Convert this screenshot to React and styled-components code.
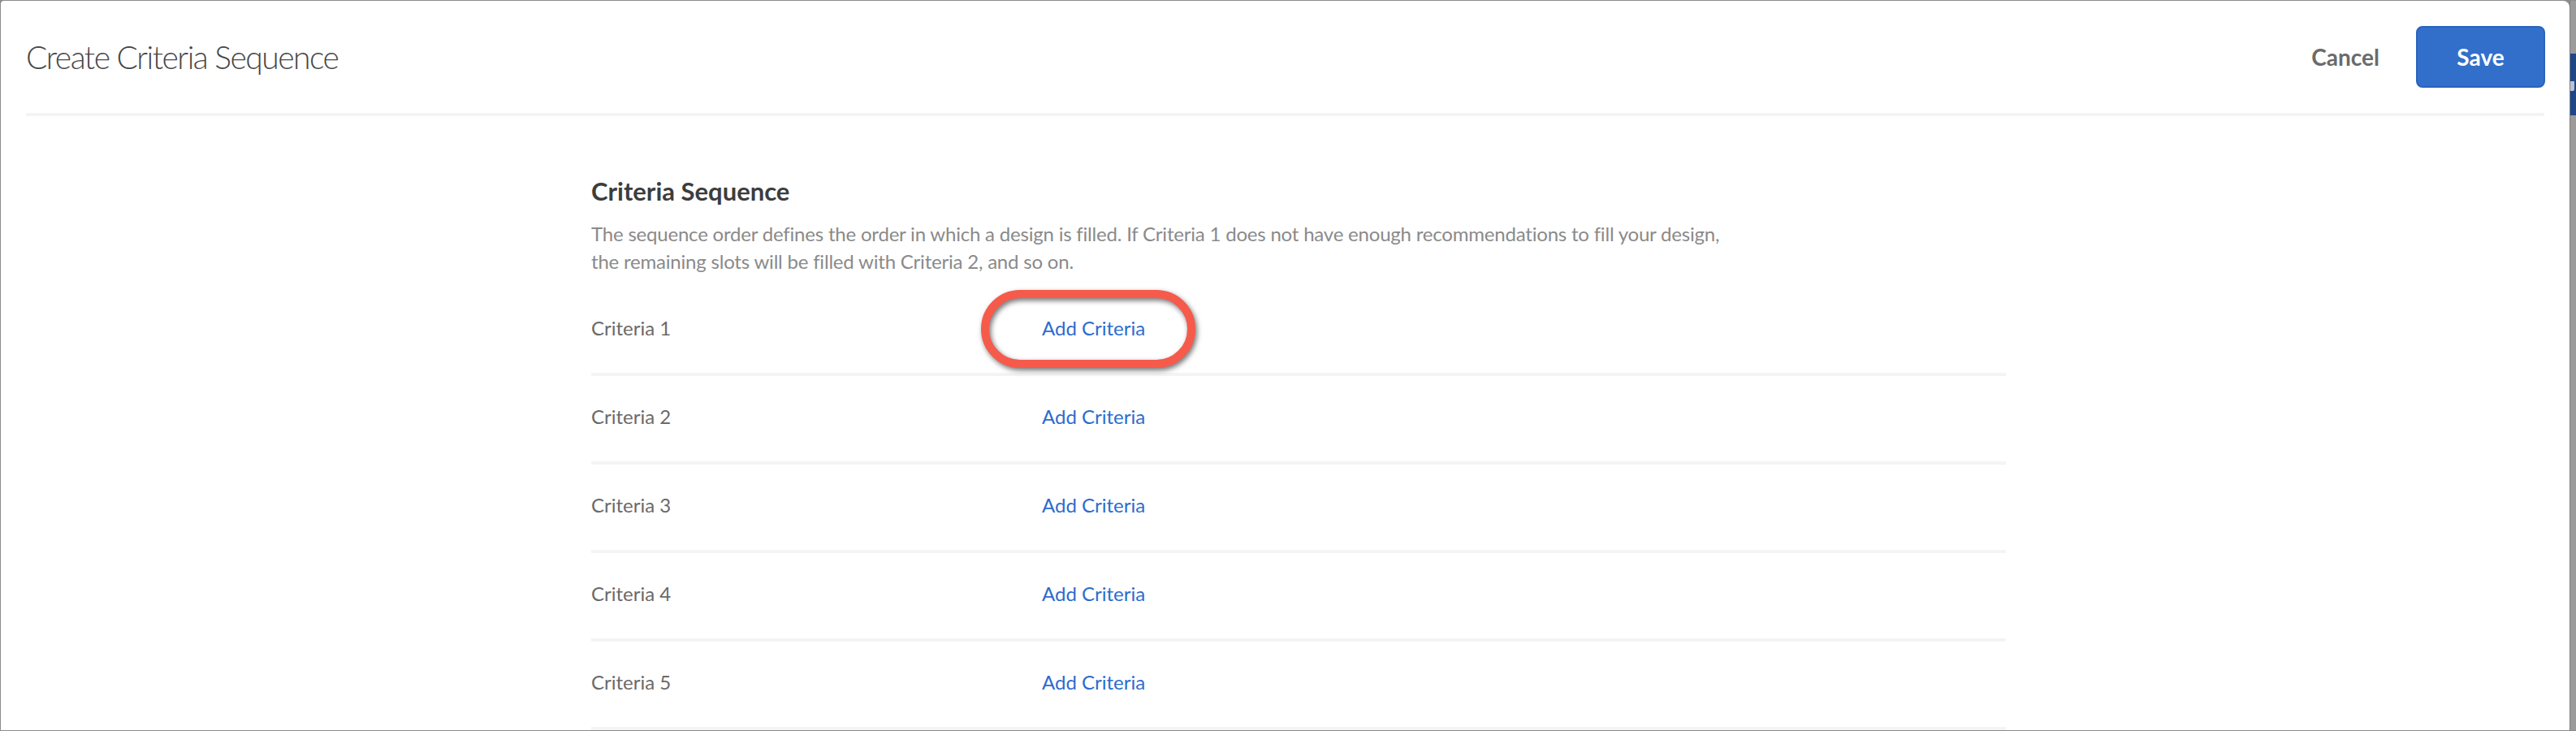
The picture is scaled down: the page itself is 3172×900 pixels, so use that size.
import React from "react";
import styled, { createGlobalStyle } from "styled-components";

const GlobalStyle = createGlobalStyle`
  *, *::before, *::after { box-sizing: border-box; }
  html, body { margin: 0; padding: 0; }
  body {
    font-family: Lato, "Open Sans", "Liberation Sans", sans-serif;
    background: #8f8f8f;
  }
`;

const Page = styled.div`
  display: flex;
  height: 900px;
  width: 3172px;
  padding: 1px 0 1px 1px;
  background: #8c8c8c;
`;

const Panel = styled.div`
  flex: 1;
  display: flex;
  flex-direction: column;
  background: #ffffff;
  border-top-left-radius: 4px;
  border-top-right-radius: 8px;
  overflow: hidden;
`;

const SideStrip = styled.div`
  width: 8px;
  flex: none;
  background: #9b9b9b;
  border-left: 1px solid #7d7d7d;
  padding-top: 65px;
`;

const SideBlock = styled.div`
  height: 76px;
  background: #1f4686;
  padding-top: 34px;
`;

const SideGlyph = styled.div`
  height: 12px;
  width: 5px;
  background: #b9c3d3;
  border-radius: 0 0 2px 0;
`;

const Header = styled.header`
  height: 138px;
  flex: none;
  display: flex;
  align-items: center;
  padding: 0 30px 0 31px;
`;

const Title = styled.h1`
  margin: 0;
  flex: 1;
  font-family: Lato, sans-serif;
  font-weight: 300;
  font-size: 39px;
  letter-spacing: -1.5px;
  line-height: 1.2;
  color: #474747;
`;

const Actions = styled.div`
  display: flex;
  align-items: center;
  gap: 45px;
`;

const TextButton = styled.button`
  border: none;
  background: none;
  padding: 0;
  font-family: Lato, sans-serif;
  font-weight: 700;
  font-size: 28px;
  color: #6b6b6b;
  cursor: pointer;
`;

const PrimaryButton = styled.button`
  width: 159px;
  height: 76px;
  border: 2px solid #2a63bd;
  border-radius: 8px;
  background: #326fcb;
  color: #ffffff;
  font-family: Lato, sans-serif;
  font-weight: 700;
  font-size: 28px;
  cursor: pointer;
`;

const Divider = styled.div`
  height: 4px;
  flex: none;
  margin: 0 31px;
  background: #f4f4f4;
`;

const Content = styled.main`
  width: 1742px;
  margin-left: 727px;
  padding-top: 74px;
`;

const SectionTitle = styled.h2`
  margin: 0 0 17px;
  font-family: Lato, sans-serif;
  font-weight: 700;
  font-size: 31px;
  line-height: 37px;
  color: #3d3d3d;
`;

const Description = styled.p`
  margin: 0 0 15px;
  max-width: 1425px;
  font-family: Lato, sans-serif;
  font-size: 24px;
  letter-spacing: -0.2px;
  line-height: 34px;
  color: #8a8a8a;
`;

const Rows = styled.div`
  display: flex;
  flex-direction: column;
`;

const Row = styled.div`
  position: relative;
  height: 109px;
  display: flex;
  align-items: center;
  padding-bottom: 4px;
  border-bottom: 4px solid #f4f4f4;
`;

const Label = styled.span`
  width: 555px;
  flex: none;
  font-family: Lato, sans-serif;
  font-size: 24px;
  line-height: 1.2;
  color: #6a6a6a;
`;

const AddLink = styled.a`
  font-family: Lato, sans-serif;
  font-size: 24px;
  line-height: 1.2;
  color: #2c6cce;
  text-decoration: none;
  cursor: pointer;
`;

const Highlight = styled.span`
  position: absolute;
  left: 480px;
  top: 3px;
  width: 264px;
  height: 96px;
  border: 10px solid #f65a4b;
  border-radius: 48px;
  filter: drop-shadow(2px 3px 3px rgba(0, 0, 0, 0.55));
  pointer-events: none;
`;

const criteria = [1, 2, 3, 4, 5];

export default function App() {
  return (
    <>
      <GlobalStyle />
      <Page>
        <Panel>
          <Header>
            <Title>Create Criteria Sequence</Title>
            <Actions>
              <TextButton>Cancel</TextButton>
              <PrimaryButton>Save</PrimaryButton>
            </Actions>
          </Header>
          <Divider />
          <Content>
            <SectionTitle>Criteria Sequence</SectionTitle>
            <Description>
              The sequence order defines the order in which a design is filled. If Criteria 1 does not have enough
              recommendations to fill your design, the remaining slots will be filled with Criteria 2, and so on.
            </Description>
            <Rows>
              {criteria.map((n) => (
                <Row key={n}>
                  <Label>Criteria {n}</Label>
                  <AddLink>Add Criteria</AddLink>
                  {n === 1 && <Highlight />}
                </Row>
              ))}
            </Rows>
          </Content>
        </Panel>
        <SideStrip>
          <SideBlock>
            <SideGlyph />
          </SideBlock>
        </SideStrip>
      </Page>
    </>
  );
}
